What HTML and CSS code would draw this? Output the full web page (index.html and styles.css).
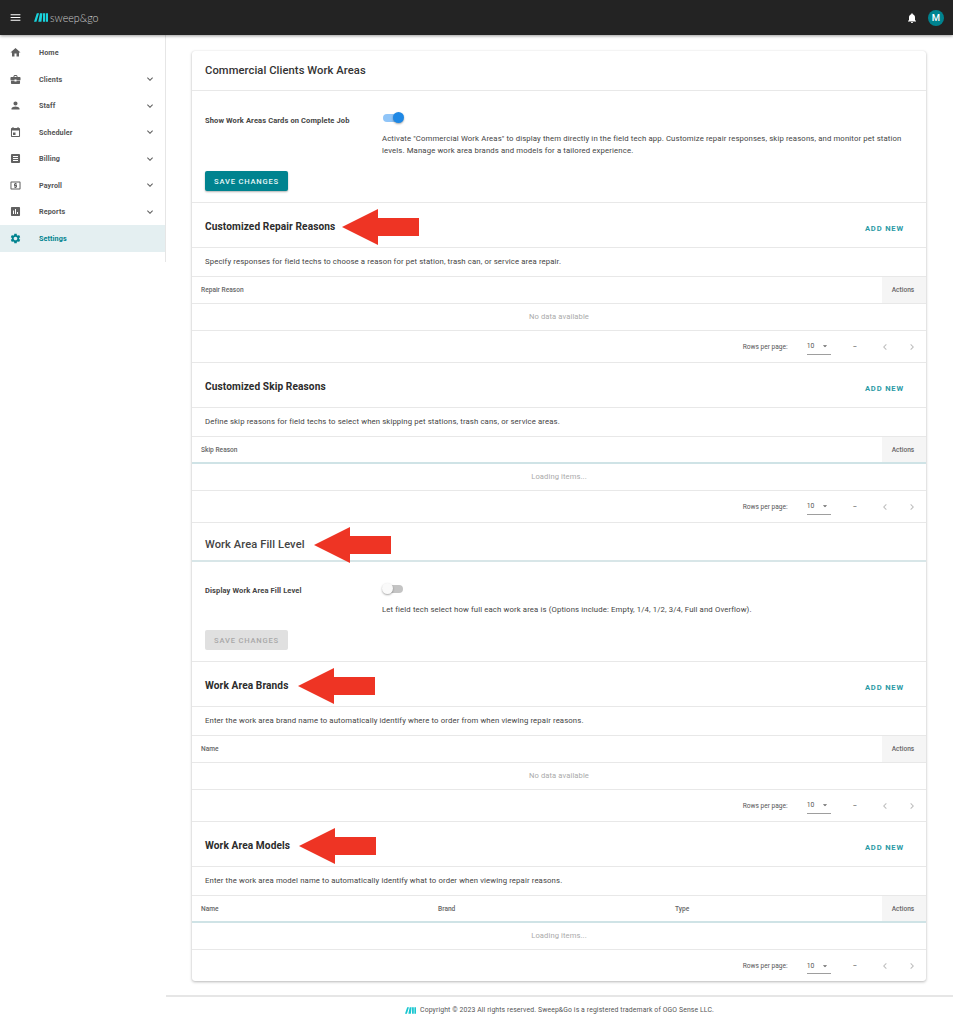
FILE: index.html
```html
<!DOCTYPE html>
<html lang="en">
<head>
<meta charset="utf-8">
<title>Commercial Clients Work Areas</title>
<link rel="stylesheet" href="styles.css">
</head>
<body>
<svg class="defs" width="0" height="0" aria-hidden="true">
  <symbol id="i-chev" viewBox="0 0 24 24"><path d="M16.59 8.59 12 13.17 7.41 8.59 6 10l6 6 6-6z"/></symbol>
  <symbol id="i-left" viewBox="0 0 24 24"><path d="M15.41 7.41 14 6l-6 6 6 6 1.41-1.41L10.83 12z"/></symbol>
  <symbol id="i-right" viewBox="0 0 24 24"><path d="M10 6 8.59 7.41 13.17 12l-4.58 4.59L10 18l6-6z"/></symbol>
  <symbol id="i-drop" viewBox="0 0 24 24"><path d="M7 10l5 5 5-5z"/></symbol>
  <symbol id="i-arrow" viewBox="0 0 77 36"><path d="M0 18 36 0V9H77V27H36V36z"/></symbol>
  <symbol id="i-logo" viewBox="0 0 15 9"><path d="M0 9 3 0H5.4L2.6 9zM4.6 9 6.4 0H9L8 9zM9.6 9V0H12V9zM12.8 9V0H15V9z"/></symbol>
</svg>

<header class="topbar">
  <svg class="menu-icon" viewBox="0 0 24 24"><path d="M3 18h18v-2H3v2zm0-5h18v-2H3v2zm0-7v2h18V6H3z"/></svg>
  <svg class="logo-mark"><use href="#i-logo"/></svg>
  <span class="logo-text">sweep&amp;go</span>
  <span class="spacer"></span>
  <svg class="bell" viewBox="0 0 24 24"><path d="M12 22c1.1 0 2-.9 2-2h-4c0 1.1.89 2 2 2zm6-6v-5c0-3.07-1.64-5.64-4.5-6.32V4c0-.83-.67-1.5-1.5-1.5s-1.5.67-1.5 1.5v.68C7.63 5.36 6 7.92 6 11v5l-2 2v1h16v-1l-2-2z"/></svg>
  <span class="avatar">M</span>
</header>

<div class="shell">
  <nav class="sidebar">
    <a class="nav-item"><svg class="nav-icon" viewBox="0 0 24 24"><path d="M10 20v-6h4v6h5v-8h3L12 3 2 12h3v8z"/></svg><span class="nav-label">Home</span></a>
    <a class="nav-item"><svg class="nav-icon" viewBox="0 0 24 24"><path d="M10 16v-1H3.01L3 19c0 1.11.89 2 2 2h14c1.11 0 2-.89 2-2v-4h-7v1h-4zm10-9h-4.01V5l-2-2h-4l-2 2v2H4c-1.1 0-2 .9-2 2v3c0 1.11.89 2 2 2h6v-2h4v2h6c1.1 0 2-.9 2-2V9c0-1.1-.9-2-2-2zm-6 0h-4V5h4v2z"/></svg><span class="nav-label">Clients</span><svg class="nav-chev"><use href="#i-chev"/></svg></a>
    <a class="nav-item"><svg class="nav-icon" viewBox="0 0 24 24"><path d="M12 12c2.21 0 4-1.79 4-4s-1.79-4-4-4-4 1.79-4 4 1.79 4 4 4zm0 2c-2.67 0-8 1.34-8 4v2h16v-2c0-2.66-5.33-4-8-4z"/></svg><span class="nav-label">Staff</span><svg class="nav-chev"><use href="#i-chev"/></svg></a>
    <a class="nav-item"><svg class="nav-icon" viewBox="0 0 24 24"><path d="M7 12h5v5H7zM16 1v2H8V1H6v2H5c-1.11 0-1.99.9-1.99 2L3 19c0 1.1.89 2 2 2h14c1.1 0 2-.9 2-2V5c0-1.1-.9-2-2-2h-1V1h-2zm3 18H5V8h14v11z"/></svg><span class="nav-label">Scheduler</span><svg class="nav-chev"><use href="#i-chev"/></svg></a>
    <a class="nav-item"><svg class="nav-icon" viewBox="0 0 24 24"><path fill-rule="evenodd" d="M5 3h14a2 2 0 0 1 2 2v14a2 2 0 0 1-2 2H5a2 2 0 0 1-2-2V5a2 2 0 0 1 2-2zm2 4v2h10V7H7zm0 4v2h10v-2H7zm0 4v2h10v-2H7z"/></svg><span class="nav-label">Billing</span><svg class="nav-chev"><use href="#i-chev"/></svg></a>
    <a class="nav-item"><svg class="nav-icon" viewBox="0 0 24 24"><path d="M11 17h2v-1h1c.55 0 1-.45 1-1v-3c0-.55-.45-1-1-1h-3v-1h4V8h-2V7h-2v1h-1c-.55 0-1 .45-1 1v3c0 .55.45 1 1 1h3v1H9v2h2v1zm9-13H4c-1.11 0-1.99.89-1.99 2L2 18c0 1.11.89 2 2 2h16c1.11 0 2-.89 2-2V6c0-1.11-.89-2-2-2zm0 14H4V6h16v12z"/></svg><span class="nav-label">Payroll</span><svg class="nav-chev"><use href="#i-chev"/></svg></a>
    <a class="nav-item"><svg class="nav-icon" viewBox="0 0 24 24"><path d="M19 3H5c-1.1 0-2 .9-2 2v14c0 1.1.9 2 2 2h14c1.1 0 2-.9 2-2V5c0-1.1-.9-2-2-2zM9 17H7v-7h2v7zm4 0h-2V7h2v10zm4 0h-2v-4h2v4z"/></svg><span class="nav-label">Reports</span><svg class="nav-chev"><use href="#i-chev"/></svg></a>
    <a class="nav-item is-active"><svg class="nav-icon" viewBox="0 0 24 24"><path d="M19.14 12.94c.04-.3.06-.61.06-.94 0-.32-.02-.64-.07-.94l2.03-1.58c.18-.14.23-.41.12-.61l-1.92-3.32c-.12-.22-.37-.29-.59-.22l-2.39.96c-.5-.38-1.03-.7-1.62-.94l-.36-2.54c-.04-.24-.24-.41-.48-.41h-3.84c-.24 0-.43.17-.47.41l-.36 2.54c-.59.24-1.13.57-1.62.94l-2.39-.96c-.22-.08-.47 0-.59.22L2.74 8.87c-.12.21-.08.47.12.61l2.03 1.58c-.05.3-.09.63-.09.94s.02.64.07.94l-2.03 1.58c-.18.14-.23.41-.12.61l1.92 3.32c.12.22.37.29.59.22l2.39-.96c.5.38 1.03.7 1.62.94l.36 2.54c.05.24.24.41.48.41h3.84c.24 0 .44-.17.47-.41l.36-2.54c.59-.24 1.13-.56 1.62-.94l2.39.96c.22.08.47 0 .59-.22l1.92-3.32c.12-.22.07-.47-.12-.61l-2.01-1.58zM12 15.6c-1.98 0-3.6-1.62-3.6-3.6s1.62-3.6 3.6-3.6 3.6 1.62 3.6 3.6-1.62 3.6-3.6 3.6z"/></svg><span class="nav-label">Settings</span></a>
  </nav>

  <div class="content">
    <main class="card">
      <section class="title-row"><h1 class="page-title">Commercial Clients Work Areas</h1></section>

      <section class="setting setting-first">
        <div class="setting-grid">
          <div class="setting-label">Show Work Areas Cards on Complete Job</div>
          <div class="setting-body">
            <span class="switch is-on"><span class="switch-knob"></span></span>
            <p class="setting-text">Activate "Commercial Work Areas" to display them directly in the field tech app. Customize repair responses, skip reasons, and monitor pet station levels. Manage work area brands and models for a tailored experience.</p>
          </div>
        </div>
        <button class="btn btn-primary">SAVE CHANGES</button>
      </section>

      <section class="block">
        <div class="block-head head-tall"><h2 class="block-title">Customized Repair Reasons</h2><svg class="arrow arrow-repair"><use href="#i-arrow"/></svg><span class="add-new">ADD NEW</span></div>
        <p class="block-desc">Specify responses for field techs to choose a reason for pet station, trash can, or service area repair.</p>
        <div class="thead"><span class="th th-grow">Repair Reason</span><span class="th-actions">Actions</span></div>
        <div class="tbody">No data available</div>
        <div class="tfoot"><span class="rows-label">Rows per page:</span><span class="rows-select">10<svg class="drop"><use href="#i-drop"/></svg></span><span class="range">–</span><svg class="pager"><use href="#i-left"/></svg><svg class="pager"><use href="#i-right"/></svg></div>
      </section>

      <section class="block">
        <div class="block-head head-tall"><h2 class="block-title">Customized Skip Reasons</h2><span class="add-new">ADD NEW</span></div>
        <p class="block-desc">Define skip reasons for field techs to select when skipping pet stations, trash cans, or service areas.</p>
        <div class="thead thead-loading"><span class="th th-grow">Skip Reason</span><span class="th-actions">Actions</span></div>
        <div class="tbody">Loading items...</div>
        <div class="tfoot"><span class="rows-label">Rows per page:</span><span class="rows-select">10<svg class="drop"><use href="#i-drop"/></svg></span><span class="range">–</span><svg class="pager"><use href="#i-left"/></svg><svg class="pager"><use href="#i-right"/></svg></div>
      </section>

      <section class="block">
        <div class="block-head head-fill"><h2 class="block-title title-soft">Work Area Fill Level</h2><svg class="arrow arrow-fill"><use href="#i-arrow"/></svg></div>
      </section>

      <section class="setting setting-fill">
        <div class="setting-grid">
          <div class="setting-label">Display Work Area Fill Level</div>
          <div class="setting-body">
            <span class="switch"><span class="switch-knob"></span></span>
            <p class="setting-text">Let field tech select how full each work area is (Options include: Empty, 1/4, 1/2, 3/4, Full and Overflow).</p>
          </div>
        </div>
        <button class="btn btn-disabled">SAVE CHANGES</button>
      </section>

      <section class="block">
        <div class="block-head head-tall"><h2 class="block-title">Work Area Brands</h2><svg class="arrow arrow-brands"><use href="#i-arrow"/></svg><span class="add-new">ADD NEW</span></div>
        <p class="block-desc">Enter the work area brand name to automatically identify where to order from when viewing repair reasons.</p>
        <div class="thead"><span class="th th-grow">Name</span><span class="th-actions">Actions</span></div>
        <div class="tbody">No data available</div>
        <div class="tfoot"><span class="rows-label">Rows per page:</span><span class="rows-select">10<svg class="drop"><use href="#i-drop"/></svg></span><span class="range">–</span><svg class="pager"><use href="#i-left"/></svg><svg class="pager"><use href="#i-right"/></svg></div>
      </section>

      <section class="block block-last">
        <div class="block-head head-tall"><h2 class="block-title">Work Area Models</h2><svg class="arrow arrow-models"><use href="#i-arrow"/></svg><span class="add-new">ADD NEW</span></div>
        <p class="block-desc">Enter the work area model name to automatically identify what to order when viewing repair reasons.</p>
        <div class="thead thead-loading"><span class="th th-col">Name</span><span class="th th-col">Brand</span><span class="th th-grow">Type</span><span class="th-actions">Actions</span></div>
        <div class="tbody">Loading items...</div>
        <div class="tfoot"><span class="rows-label">Rows per page:</span><span class="rows-select">10<svg class="drop"><use href="#i-drop"/></svg></span><span class="range">–</span><svg class="pager"><use href="#i-left"/></svg><svg class="pager"><use href="#i-right"/></svg></div>
      </section>
    </main>

    <footer class="page-footer">
      <svg class="footer-logo"><use href="#i-logo"/></svg>
      <span>Copyright © 2023 All rights reserved. Sweep&amp;Go is a registered trademark of OGO Sense LLC.</span>
    </footer>
  </div>
</div>
</body>
</html>
```

FILE: styles.css
```css
* { box-sizing: border-box; }
html, body { margin: 0; padding: 0; }
body {
  width: 953px;
  height: 1024px;
  overflow: hidden;
  background: #fff;
  font-family: Roboto, "Liberation Sans", sans-serif;
  color: #333;
}
.defs { position: absolute; }

.topbar {
  height: 35px;
  background: #232323;
  display: flex;
  align-items: center;
  padding: 0 9px 0 9px;
  box-shadow: 0 1px 3px rgba(0,0,0,.4);
  position: relative;
}
.menu-icon { width: 13px; height: 13px; fill: #fff; }
.logo-mark { width: 14px; height: 9px; fill: #19d3dc; margin-left: 12px; }
.logo-text { color: #cfcfcf; font-family: Lato, sans-serif; font-weight: 300; font-size: 10.7px; margin-left: 2px; }
.spacer { flex: 1; }
.bell { width: 12px; height: 12px; fill: #fff; margin-right: 10px; }
.avatar {
  width: 16px; height: 16px; border-radius: 50%;
  background: #00838f; color: #fff;
  font-size: 9.5px; font-weight: 500;
  display: flex; align-items: center; justify-content: center;
}

.shell { display: flex; align-items: flex-start; }
.sidebar {
  width: 166px;
  height: 227px;
  flex: none;
  padding-top: 4.5px;
  border-right: 1px solid #e6e6e6;
}
.nav-item {
  height: 26.5px;
  display: flex;
  align-items: center;
  padding: 0 9px 0 10px;
  color: #555;
}
.nav-icon { width: 11px; height: 11px; fill: #616161; flex: none; margin-right: 18px; transform: scale(1.1); }
.nav-label { font-size: 7.2px; font-weight: 700; letter-spacing: .1px; flex: 1; }
.nav-chev { width: 12px; height: 12px; fill: #616161; flex: none; }
.is-active { background: #e4eff1; color: #00838f; }
.is-active .nav-icon { fill: #00838f; }

.content { flex: 1; min-width: 0; }
.card {
  margin: 16px 27px 0 26px;
  height: 930px;
  border-radius: 3px;
  background: #fff;
  box-shadow: 0 1px 3px rgba(0,0,0,.28), 0 0 1px rgba(0,0,0,.1);
}
.title-row { height: 40px; display: flex; align-items: center; padding: 0 13px 1px; border-bottom: 1px solid #e8e8e8; }
.page-title { margin: 0; font-size: 11.2px; font-weight: 500; color: #333; letter-spacing: .08px; }

.setting { padding: 0 13px; border-bottom: 1px solid #e8e8e8; }
.setting-first { height: 112px; padding-top: 20px; }
.setting-fill { height: 100px; padding-top: 20px; }
.setting-grid { display: flex; }
.setting-label { width: 177px; flex: none; font-size: 7.5px; font-weight: 700; color: #444; letter-spacing: .12px; padding-top: 4px; line-height: 11px; }
.setting-fill .setting-label { padding-top: 3px; }
.setting-body { flex: 1; min-width: 0; }
.setting-text { margin: 7.5px 0 0; font-size: 7.75px; line-height: 12px; letter-spacing: .13px; color: #444; }

.switch { display: block; width: 21px; height: 14px; position: relative; }
.switch::before {
  content: ""; position: absolute; left: 1px; right: 0; top: 3px; height: 8px;
  border-radius: 4px; background: #c4c4c4;
}
.switch-knob {
  position: absolute; left: 0; top: 1px; width: 11px; height: 11px; border-radius: 50%;
  background: #fafafa; box-shadow: 0 1px 2px rgba(0,0,0,.35);
}
.is-on::before { background: #90c5f8; }
.is-on .switch-knob { left: 11px; background: #1e88e5; }

.btn {
  display: block; width: 83px; height: 20px; padding: 0; border: 0; border-radius: 2px;
  font: 500 7.6px Roboto, sans-serif; letter-spacing: .8px; text-align: center;
}
.btn-primary { background: #00838f; color: #e8f7f8; margin-top: 14.5px; box-shadow: 0 1px 2px rgba(0,0,0,.3); }
.btn-disabled { background: #e0e0e0; color: #a8a8a8; margin-top: 14.5px; }

.block { position: relative; }
.block-head {
  display: flex; align-items: center; justify-content: space-between;
  padding: 0 13px; position: relative; border-bottom: 1px solid #e8e8e8;
}
.head-tall { height: 45px; }
.head-fill { height: 39px; border-bottom: 2px solid #d8e6e8; }
.block-title { margin: 2px 0 0; font-size: 10.15px; font-weight: 700; color: #2c2c2c; letter-spacing: .1px; }
.title-soft { font-size: 11.1px; font-weight: 500; color: #444; margin: 6px 0 0; }
.add-new { font-size: 7.6px; font-weight: 700; letter-spacing: .85px; color: #2a9aa5; margin: 7px 9px 0 0; }

.arrow { position: absolute; width: 77px; height: 36px; fill: #ee3424; }
.arrow-repair { left: 150px; top: 6px; }
.arrow-fill { left: 122px; top: 4px; }
.arrow-brands { left: 106px; top: 6px; }
.arrow-models { left: 107px; top: 6px; }

.block-desc {
  margin: 0; height: 29px; padding: 0 13px 2px; display: flex; align-items: center;
  font-size: 7.74px; letter-spacing: .13px; color: #444; border-bottom: 1px solid #e8e8e8;
}
.thead { height: 27px; display: flex; border-bottom: 1px solid #e8e8e8; }
.thead-loading { border-bottom: 2px solid #cfe3e6; }
.th { font-size: 6.6px; font-weight: 500; color: #666; padding-left: 9px; display: flex; align-items: center; }
.th-grow { flex: 1; }
.th-col { width: 237px; }
.th-actions {
  width: 44px; background: #f5f5f5; color: #666; font-size: 6.6px; font-weight: 500;
  display: flex; align-items: center; justify-content: center; padding-right: 2px;
}
.tbody {
  height: 27px; display: flex; align-items: center; justify-content: center; padding-bottom: 2px;
  font-size: 7.6px; color: #aaa; letter-spacing: .1px; border-bottom: 1px solid #e8e8e8;
}
.tfoot {
  height: 32px; display: flex; align-items: center; justify-content: flex-end;
  padding-right: 8px; font-size: 6.6px; color: #555; border-bottom: 1px solid #e8e8e8;
}
.block-last .tfoot { border-bottom: 0; }
.rows-label { margin-right: 19px; }
.rows-select {
  width: 24px; height: 16px; display: flex; align-items: center; justify-content: space-between;
  border-bottom: 1px solid #9e9e9e; font-size: 6.8px; margin-right: 22px;
}
.drop { width: 10px; height: 10px; fill: #666; margin-right: 1px; }
.range { margin-right: 22px; }
.pager { width: 12px; height: 12px; fill: #bdbdbd; margin-left: 15px; }
.range + .pager { margin-left: 0; }

.page-footer {
  margin-top: 14px;
  border-top: 2px solid #e6e6e6;
  height: 28px;
  display: flex; align-items: center; justify-content: center; gap: 4px;
  font-size: 6.85px; letter-spacing: .12px; color: #555;
}
.footer-logo { width: 11px; height: 7px; fill: #19c6d0; }
```
